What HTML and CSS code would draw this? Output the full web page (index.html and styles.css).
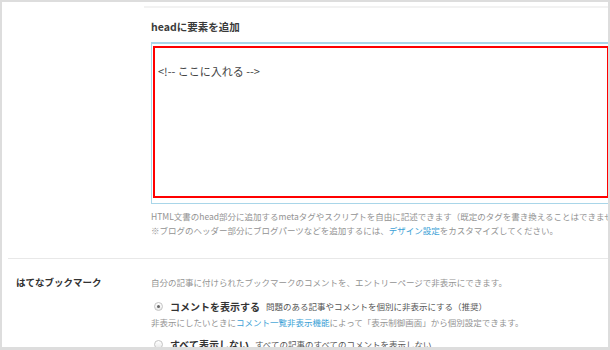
FILE: index.html
```html
<!DOCTYPE html>
<html lang="ja">
<head>
    <meta charset="UTF-8">
    <meta name="viewport" content="width=device-width, initial-scale=1.0">
    <title>詳細設定</title>
    <link rel="stylesheet" href="styles.css">
</head>
<body>
    <div class="panel">
        <div class="row row-head">
            <div class="label"></div>
            <div class="field">
                <h3 class="field-title">headに要素を追加</h3>
                <div class="editor">
                    <div class="highlight">&lt;!-- ここに入れる --&gt;</div>
                </div>
                <p class="help">
                    HTML文書のhead部分に追加するmetaタグやスクリプトを自由に記述できます（既定のタグを書き換えることはできません）<br>
                    ※ブログのヘッダー部分にブログパーツなどを追加するには、<a href="#">デザイン設定</a>をカスタマイズしてください。
                </p>
            </div>
        </div>
        <div class="row row-bookmark">
            <div class="label">はてなブックマーク</div>
            <div class="field">
                <p class="help">自分の記事に付けられたブックマークのコメントを、エントリーページで非表示にできます。</p>
                <label class="option">
                    <span class="radio checked"></span>
                    <span class="option-name">コメントを表示する</span>
                    <span class="option-desc">問題のある記事やコメントを個別に非表示にする（推奨）</span>
                </label>
                <p class="help note">非表示にしたいときに<a href="#">コメント一覧非表示機能</a>によって「表示制御画面」から個別設定できます。</p>
                <label class="option option-last">
                    <span class="radio"></span>
                    <span class="option-name">すべて表示しない</span>
                    <span class="option-desc">すべての記事のすべてのコメントを表示しない</span>
                </label>
            </div>
        </div>
    </div>
</body>
</html>
```

FILE: styles.css
```css
html, body {
    margin: 0;
    padding: 0;
}
body {
    background-color: #dddddd;
    padding: 2px 2px 3px 2px;
    font-family: "Noto Sans CJK JP", "Noto Sans", sans-serif;
    color: #333;
}
.panel {
    background-color: #fff;
    height: 345px;
    overflow: hidden;
}
.row {
    display: grid;
    grid-template-columns: 136px 1fr;
    margin-left: 6px;
}
.row-head {
    border-bottom: 1px solid #e8e8e8;
    padding-bottom: 21px;
}
.label {
    padding-left: 8px;
    font-size: 9.5px;
    font-weight: bold;
    line-height: 14px;
}
.field {
    padding-left: 7px;
    min-width: 0;
}
.row-head .field {
    margin-top: 4px;
    border-top: 2px solid #f2f2f2;
}
.field-title {
    margin: 12px 0 8px 0;
    font-size: 10.5px;
    line-height: 14px;
    font-weight: bold;
    color: #3a3a3a;
}
.editor {
    margin-right: -20px;
    border: 1px solid #a9d6e9;
    border-top-width: 2px;
    padding: 2px 1px 5px 1px;
}
.highlight {
    width: 449px;
    height: 132px;
    border: 2px solid #ff0000;
    padding: 16px 0 0 3px;
    font-size: 11px;
    line-height: 14px;
    color: #444;
}
.help {
    margin: 6px 0 0 0;
    font-size: 8.5px;
    line-height: 13.7px;
    color: #939393;
    white-space: nowrap;
    overflow: hidden;
}
.help a {
    color: #3b9fd6;
    text-decoration: none;
}
.row-bookmark .label {
    padding-top: 16px;
}
.row-bookmark .field {
    padding-top: 16px;
}
.row-bookmark .help {
    margin: 0;
    line-height: 14px;
}
.option {
    display: flex;
    align-items: center;
    margin: 10px 0 0 3px;
    height: 14px;
    white-space: nowrap;
}
.option-last {
    margin-top: 8px;
}
.radio {
    width: 7px;
    height: 7px;
    border: 1px solid #c4c4c4;
    border-radius: 50%;
    background: linear-gradient(#fff, #e9e9e9);
    display: flex;
    align-items: center;
    justify-content: center;
    margin-right: 7px;
}
.radio.checked::after {
    content: "";
    width: 3px;
    height: 3px;
    border-radius: 50%;
    background-color: #666;
}
.option-name {
    font-size: 10px;
    font-weight: bold;
    color: #333;
    margin-right: 6px;
}
.option-desc {
    font-size: 8.5px;
    color: #555;
}
.row-bookmark .help.note {
    margin-top: 2px;
}
```
